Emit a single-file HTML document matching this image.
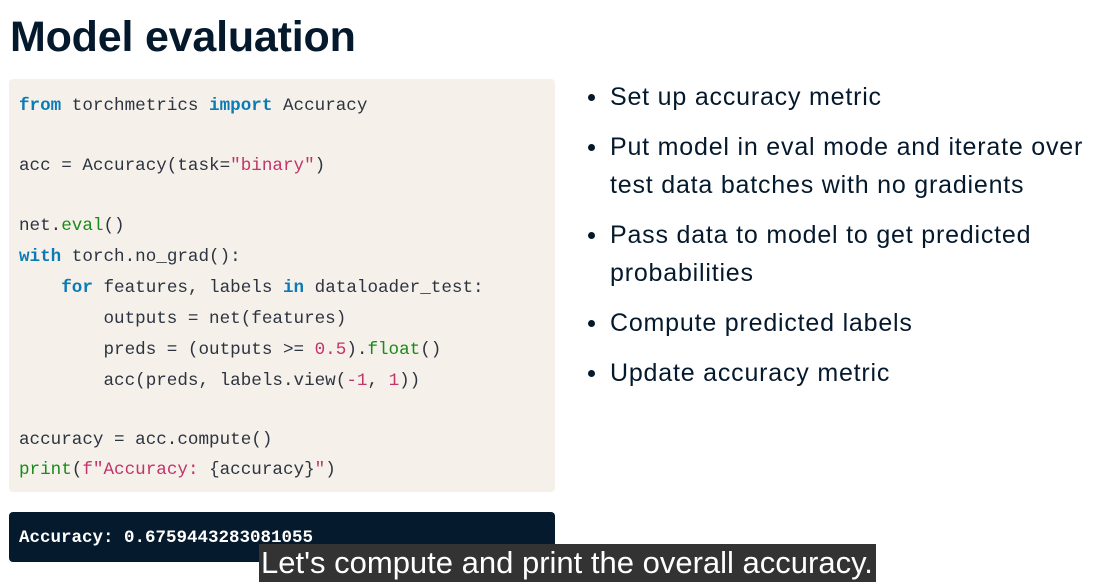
<!DOCTYPE html>
<html><head><meta charset="utf-8"><style>
body{margin:0;width:1107px;height:587px;background:#fff;position:relative;overflow:hidden;font-family:"Liberation Sans",sans-serif;color:#05192d}
h1{position:absolute;left:10px;top:13px;margin:0;font-size:43px;font-weight:bold;letter-spacing:-0.2px}
.code{position:absolute;left:9px;top:79px;width:546px;height:413px;background:#f5f1ea;border-radius:4px}
.ln{position:absolute;left:19px;font-family:"Liberation Mono",monospace;font-size:17.6px;color:#2d3440;white-space:pre;line-height:20px}
.k{color:#0b7bb5;font-weight:bold}.s{color:#c2336b}.f{color:#1a8a1a}
.out{position:absolute;left:9px;top:512px;width:546px;height:50px;background:#061a2d;border-radius:4px}
.out span{position:absolute;left:10px;top:16px;color:#fff;font-family:"Liberation Mono",monospace;font-size:17.5px;font-weight:bold}
.b{position:absolute;left:610px;font-size:25px;letter-spacing:0.8px;line-height:38px;white-space:nowrap}
.b:before{content:"";position:absolute;left:-22px;top:16px;width:7px;height:7px;border-radius:50%;background:#05192d}
.cap{position:absolute;left:259px;top:544px;width:617px;height:38px;background:#333;color:#fff;font-size:31px;line-height:38px;white-space:nowrap;overflow:hidden}
.cap span{display:inline-block;padding-left:2px}
</style></head><body>
<h1>Model evaluation</h1>
<div class="code"></div>
<div class="ln" style="top:96px"><span class="k">from</span> torchmetrics <span class="k">import</span> Accuracy</div>
<div class="ln" style="top:156px">acc = Accuracy(task=<span class="s">"binary"</span>)</div>
<div class="ln" style="top:216px">net.<span class="f">eval</span>()</div>
<div class="ln" style="top:247px"><span class="k">with</span> torch.no_grad():</div>
<div class="ln" style="top:278px">    <span class="k">for</span> features, labels <span class="k">in</span> dataloader_test:</div>
<div class="ln" style="top:309px">        outputs = net(features)</div>
<div class="ln" style="top:340px">        preds = (outputs &gt;= <span class="s">0.5</span>).<span class="f">float</span>()</div>
<div class="ln" style="top:371px">        acc(preds, labels.view(<span class="s">-1</span>, <span class="s">1</span>))</div>
<div class="ln" style="top:430px">accuracy = acc.compute()</div>
<div class="ln" style="top:460px"><span class="f">print</span>(<span class="s">f"Accuracy: </span>{accuracy}<span class="s">"</span>)</div>
<div class="out"><span>Accuracy: 0.6759443283081055</span></div>
<div class="b" style="top:78px">Set up accuracy metric</div>
<div class="b" style="top:128px">Put model in eval mode and iterate over<br>test data batches with no gradients</div>
<div class="b" style="top:216px">Pass data to model to get predicted<br>probabilities</div>
<div class="b" style="top:304px">Compute predicted labels</div>
<div class="b" style="top:354px">Update accuracy metric</div>
<div class="cap"><span>Let's compute and print the overall accuracy.</span></div>
</body></html>
